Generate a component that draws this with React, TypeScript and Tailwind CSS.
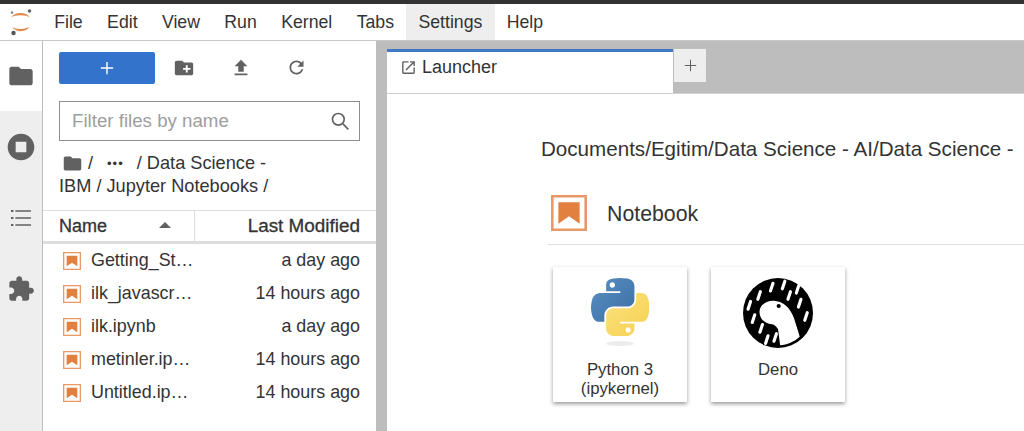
import { ReactNode } from 'react';

const MENU = ['File', 'Edit', 'View', 'Run', 'Kernel', 'Tabs', 'Settings', 'Help'];

const FILES = [
  { name: 'Getting_St…', modified: 'a day ago' },
  { name: 'ilk_javascr…', modified: '14 hours ago' },
  { name: 'ilk.ipynb', modified: 'a day ago' },
  { name: 'metinler.ip…', modified: '14 hours ago' },
  { name: 'Untitled.ip…', modified: '14 hours ago' },
];

function Icon({ d, className }: { d: string; className: string }) {
  return (
    <svg viewBox="0 0 24 24" fill="currentColor" className={className}>
      <path d={d} />
    </svg>
  );
}

const FOLDER = 'M10 4H4c-1.1 0-2 .9-2 2v12c0 1.1.9 2 2 2h16c1.1 0 2-.9 2-2V8c0-1.1-.9-2-2-2h-8l-2-2z';
const NEW_FOLDER = 'M20 6h-8l-2-2H4c-1.11 0-1.99.89-1.99 2L2 18c0 1.11.89 2 2 2h16c1.11 0 2-.89 2-2V8c0-1.11-.89-2-2-2zm-1 8h-3v3h-2v-3h-3v-2h3V9h2v3h3v2z';
const UPLOAD = 'M9 16h6v-6h4l-7-7-7 7h4zm-4 2h14v2H5z';
const REFRESH = 'M17.65 6.35C16.2 4.9 14.21 4 12 4c-4.42 0-7.99 3.58-7.99 8s3.57 8 7.99 8c3.73 0 6.84-2.55 7.73-6h-2.08c-.82 2.33-3.04 4-5.65 4-3.31 0-6-2.69-6-6s2.69-6 6-6c1.66 0 3.14.69 4.22 1.78L13 11h7V4l-2.35 2.35z';
const STOP = 'M12 2C6.48 2 2 6.48 2 12s4.48 10 10 10 10-4.48 10-10S17.52 2 12 2zm4 14H8V8h8v8z';
const EXTENSION = 'M20.5 11H19V7c0-1.1-.9-2-2-2h-4V3.5C13 2.12 11.88 1 10.5 1S8 2.12 8 3.5V5H4c-1.1 0-1.99.9-1.99 2v3.8H3.5c1.49 0 2.7 1.21 2.7 2.7s-1.21 2.7-2.7 2.7H2V20c0 1.1.9 2 2 2h3.8v-1.5c0-1.49 1.21-2.7 2.7-2.7 1.49 0 2.7 1.21 2.7 2.7V22H17c1.1 0 2-.9 2-2v-4h1.5c1.38 0 2.5-1.12 2.5-2.5S21.88 11 20.5 11z';
const LAUNCH = 'M19 19H5V5h7V3H5c-1.11 0-2 .9-2 2v14c0 1.1.89 2 2 2h14c1.1 0 2-.9 2-2v-7h-2v7zM14 3v2h3.59l-9.83 9.83 1.41 1.41L19 6.41V10h2V3h-7z';

function ListIcon() {
  return (
    <svg viewBox="0 0 20 18" className="h-[18px] w-[20px]" fill="currentColor">
      <path d="M0 1h2.4v2H0zM0 8h2.4v2H0zM0 15h2.4v2H0zM4.4 1.2H20v1.6H4.4zM4.4 8.2H20v1.6H4.4zM4.4 15.2H20v1.6H4.4z" />
    </svg>
  );
}

function NotebookIcon({ className }: { className: string }) {
  return (
    <svg viewBox="0 0 22 22" className={className}>
      <path fill="#e2803f" fillOpacity="0.8" fillRule="evenodd" d="M0 0h22v22H0zM1.6 1.6v18.8h18.8V1.6z" />
      <path fill="#e2803f" d="M17.5 17.5L11 13l-6.5 4.5V4.5h13z" />
    </svg>
  );
}

function JupyterLogo() {
  return (
    <svg viewBox="0 0 24 28" className="h-[28px] w-[24px]">
      <path d="M2 9.5C6 3.6 17 3.6 21 9.5C17 6.6 6 6.6 2 9.5z" fill="#e08a4c" />
      <path d="M3 19C7 24.6 17 24.6 21 18.6C17 21.6 7 21.8 3 19z" fill="#e08a4c" />
      <circle cx="3" cy="4.6" r="1.3" fill="#8a8a8a" />
      <circle cx="20.5" cy="3" r="1.8" fill="#666" />
      <circle cx="4.5" cy="25" r="2.2" fill="#555" />
    </svg>
  );
}

function PythonLogo() {
  return (
    <div className="flex flex-col items-center">
      <svg viewBox="0 0 110 110" className="h-[58px] w-[58px]">
        <defs>
          <linearGradient id="pyBlue" x1="0" y1="0" x2="1" y2="1">
            <stop offset="0" stopColor="#5b90c2" />
            <stop offset="1" stopColor="#3a6ea5" />
          </linearGradient>
          <linearGradient id="pyYellow" x1="0" y1="0" x2="1" y2="1">
            <stop offset="0" stopColor="#fbe27f" />
            <stop offset="1" stopColor="#f6d04f" />
          </linearGradient>
        </defs>
        <path
          fill="url(#pyBlue)"
          d="M54.919 0c-4.584.022-8.961.413-12.812 1.095C30.76 3.099 28.7 7.295 28.7 15.032v10.219h26.813v3.406H18.638c-7.793 0-14.616 4.684-16.75 13.594-2.462 10.213-2.571 16.586 0 27.25 1.905 7.938 6.457 13.594 14.25 13.594h9.219v-12.25c0-8.85 7.657-16.656 16.75-16.656h26.781c7.454 0 13.406-6.138 13.406-13.625V15.032c0-7.266-6.13-12.725-13.406-13.937C64.282.328 59.502-.02 54.918.001zm-14.5 8.219c2.77 0 5.031 2.299 5.031 5.125 0 2.816-2.262 5.094-5.031 5.094-2.78 0-5.031-2.278-5.031-5.094 0-2.826 2.252-5.125 5.031-5.125z"
        />
        <path
          fill="url(#pyYellow)"
          d="M85.638 28.657v11.906c0 9.231-7.826 17-16.75 17H42.106c-7.336 0-13.406 6.278-13.406 13.625v25.531c0 7.266 6.319 11.54 13.406 13.625 8.488 2.496 16.627 2.947 26.781 0 6.75-1.954 13.406-5.888 13.406-13.625V86.501H55.512v-3.406h40.188c7.793 0 10.696-5.436 13.406-13.594 2.8-8.399 2.68-16.476 0-27.25-1.926-7.757-5.604-13.594-13.406-13.594zM70.575 93.313c2.78 0 5.031 2.278 5.031 5.094 0 2.826-2.252 5.125-5.031 5.125-2.77 0-5.031-2.299-5.031-5.125 0-2.816 2.262-5.094 5.031-5.094z"
        />
      </svg>
      <div className="mt-[5px] h-[5px] w-[28px] rounded-[50%] bg-[#ececec]" />
    </div>
  );
}

function DenoLogo() {
  const rain = [
    [41, 13], [58, 10], [78, 16], [66, 25], [81, 36], [90, 55],
    [23, 25], [9, 39], [15, 58], [26, 72], [34, 88], [46, 85],
  ];
  return (
    <svg viewBox="0 0 100 100" className="h-[70px] w-[70px]">
      <circle cx="50" cy="50" r="50" fill="#000" />
      <g stroke="#fff" strokeWidth="4.5" strokeLinecap="round">
        {rain.map(([x, y]) => (
          <line key={`${x}-${y}`} x1={x - 1.8} y1={y + 5.5} x2={x + 1.8} y2={y - 5.5} />
        ))}
      </g>
      <path
        fill="#fff"
        d="M23.5 48.5C24 38 34 32 44 32.5C56 33 68 42 73 58C76 68 79 76 81 84C73 91 63 96 53 96C52 88 51 80 50 73C47 68 44 66 41 66C33 66 24 60 23.5 48.5z"
      />
      <circle cx="51" cy="40" r="3" fill="#000" />
    </svg>
  );
}

function ActivityTab({ active, children }: { active?: boolean; children: ReactNode }) {
  return (
    <div className={`flex w-full items-center justify-center ${active ? 'h-[70px] bg-white' : 'h-[71px] text-[#616161]'}`}>
      {children}
    </div>
  );
}

function KernelCard({ label, logo }: { label: ReactNode; logo: ReactNode }) {
  return (
    <div className="flex h-[135px] w-[134px] flex-col items-center bg-white pt-[11px] shadow-[0_2px_4px_rgba(0,0,0,0.4)]">
      <div className="flex h-[72px] items-start">{logo}</div>
      <div className="mt-[10px] text-center text-[16.8px] leading-[19px] text-[#333]">{label}</div>
    </div>
  );
}

export default function App() {
  return (
    <div className="flex h-screen w-full flex-col overflow-hidden bg-white font-['Liberation_Sans',Arial,sans-serif] text-[#333]">
      <div className="h-[4px] shrink-0 bg-[#333]" />

      {/* menu bar */}
      <div className="flex h-[37px] shrink-0 items-center border-b border-[#c8c8c8] pl-[9px]">
        <div className="w-[33px]">
          <JupyterLogo />
        </div>
        <div className="flex h-full">
          {MENU.map((item) => (
            <div
              key={item}
              className={`flex h-full items-center px-[12.2px] text-[17.7px] ${item === 'Settings' ? 'bg-[#eeeeee]' : ''}`}
            >
              {item}
            </div>
          ))}
        </div>
      </div>

      <div className="flex min-h-0 flex-1">
        {/* activity bar */}
        <div className="flex w-[43px] shrink-0 flex-col border-r border-[#bdbdbd] bg-[#eeeeee] text-[#616161]">
          <ActivityTab active>
            <Icon d={FOLDER} className="h-[28px] w-[28px]" />
          </ActivityTab>
          <ActivityTab>
            <Icon d={STOP} className="h-[32px] w-[32px]" />
          </ActivityTab>
          <ActivityTab>
            <ListIcon />
          </ActivityTab>
          <ActivityTab>
            <Icon d={EXTENSION} className="h-[28px] w-[28px]" />
          </ActivityTab>
        </div>

        {/* file browser */}
        <div className="flex w-[333px] shrink-0 flex-col">
          <div className="flex h-[60px] items-start pl-[16px] pt-[11px] text-[#616161]">
            <div className="flex h-[32px] w-[96px] items-center justify-center rounded-[2px] bg-[#3373cc] text-white">
              <svg viewBox="0 0 16 16" className="h-[14px] w-[14px]" stroke="currentColor" strokeWidth="1.6">
                <path d="M8 1v14M1 8h14" />
              </svg>
            </div>
            <Icon d={NEW_FOLDER} className="ml-[18px] mt-[5px] h-[22px] w-[22px]" />
            <Icon d={UPLOAD} className="ml-[35px] mt-[5px] h-[22px] w-[22px]" />
            <Icon d={REFRESH} className="ml-[34px] mt-[5px] h-[21px] w-[21px]" />
          </div>

          <div className="mx-[16px] flex h-[40px] w-[301px] items-center justify-between border border-[#8e8e8e] pl-[12px] pr-[9px]">
            <span className="text-[18.7px] text-[#9e9e9e]">Filter files by name</span>
            <svg viewBox="0 0 24 24" className="h-[20px] w-[20px] text-[#616161]" fill="none" stroke="currentColor" strokeWidth="2">
              <circle cx="10" cy="10" r="7" />
              <path d="M15.5 15.5L22 22" />
            </svg>
          </div>

          <div className="flex h-[69px] flex-col pl-[16px] pt-[11px] text-[18.2px] leading-[23px]">
            <div className="flex items-center pl-[3px]">
              <Icon d={FOLDER} className="h-[21px] w-[21px] text-[#616161]" />
              <span className="ml-[5px]">/</span>
              <span className="ml-[14px] text-[13px] tracking-[1px]">•••</span>
              <span className="ml-[13px]">/ Data Science -</span>
            </div>
            <div>IBM / Jupyter Notebooks /</div>
          </div>

          <div className="flex h-[34px] border-y border-[#dddddd] border-b-[3px] text-[18px]">
            <div className="flex w-[152px] items-center justify-between border-r border-[#dddddd] pl-[16px] pr-[23px] [-webkit-text-stroke:0.3px]">
              <span>Name</span>
              <span className="mb-[3px] h-0 w-0 border-x-[6px] border-b-[6px] border-x-transparent border-b-[#616161]" />
            </div>
            <div className="flex flex-1 items-center justify-end pr-[16px] text-[18.9px] [-webkit-text-stroke:0.3px]">Last Modified</div>
          </div>

          <div className="text-[17.9px]">
            {FILES.map((file) => (
              <div key={file.name} className="flex h-[33px] items-center pl-[20px] pr-[16px]">
                <NotebookIcon className="h-[18px] w-[18px] shrink-0" />
                <span className="ml-[10px] flex-1">{file.name}</span>
                <span>{file.modified}</span>
              </div>
            ))}
          </div>
        </div>

        {/* main dock area */}
        <div className="flex min-w-0 flex-1 flex-col bg-[#bdbdbd] pl-[11px]">
          <div className="flex h-[52px] shrink-0 items-start pt-[8px]">
            <div className="flex h-[44px] w-[286px] items-center border-t-[3px] border-[#3f78c4] bg-white pb-[10px] pl-[13px]">
              <Icon d={LAUNCH} className="h-[17px] w-[17px] text-[#616161]" />
              <span className="ml-[5px] text-[18px]">Launcher</span>
            </div>
            <div className="ml-[1px] flex h-[33px] w-[32px] items-center justify-center bg-[#eeeeee] text-[#616161]">
              <svg viewBox="0 0 16 16" className="h-[13px] w-[13px]" stroke="currentColor" strokeWidth="1.3">
                <path d="M8 1v14M1 8h14" />
              </svg>
            </div>
          </div>

          <div className="min-h-0 flex-1 overflow-hidden border-t border-[#d0d0d0] bg-white pl-[154px] pt-[42px]">
            <div className="whitespace-nowrap text-[20.6px] leading-[26px]">
              Documents/Egitim/Data Science - AI/Data Science -
            </div>
            <div className="ml-[7px] mt-[33px] flex h-[50px] items-start border-b border-[#dddddd] pl-[3px]">
              <NotebookIcon className="h-[36px] w-[36px]" />
              <span className="ml-[20px] mt-[4px] text-[21.3px] leading-[30px]">Notebook</span>
            </div>
            <div className="ml-[12px] mt-[22px] flex gap-[24px]">
              <KernelCard
                logo={<PythonLogo />}
                label={
                  <>
                    Python 3
                    <br />
                    (ipykernel)
                  </>
                }
              />
              <KernelCard logo={<DenoLogo />} label="Deno" />
            </div>
          </div>
        </div>
      </div>
    </div>
  );
}
